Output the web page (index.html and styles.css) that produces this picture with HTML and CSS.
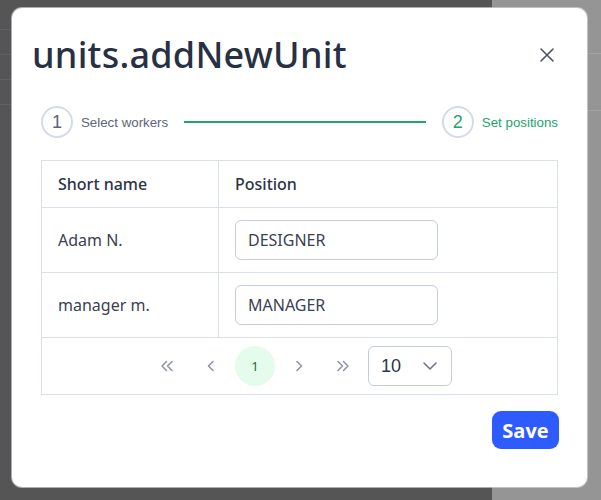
FILE: index.html
```html
<!DOCTYPE html>
<html>
<head>
<meta charset="utf-8">
<link rel="stylesheet" href="styles.css">
</head>
<body>
<div class="page">
  <div class="page-left">
    <div class="bg-row"></div>
    <div class="bg-row"></div>
    <div class="bg-row"></div>
    <div class="bg-row"></div>
  </div>
  <div class="page-right">
    <div class="bg-row-r"></div>
    <div class="bg-row-r"></div>
  </div>
</div>
<div class="modal">
  <div class="modal-header">
    <h1 class="title">units.addNewUnit</h1>
    <button class="close" aria-label="close">
      <svg width="14" height="14" viewBox="0 0 14 14"><path d="M1 1L13 13M13 1L1 13" stroke="#4a5263" stroke-width="1.6" fill="none" stroke-linecap="round"/></svg>
    </button>
  </div>
  <div class="modal-body">
    <div class="stepper">
      <div class="step">
        <span class="step-circle">1</span>
        <span class="step-label">Select workers</span>
      </div>
      <div class="step-line"></div>
      <div class="step step-active">
        <span class="step-circle">2</span>
        <span class="step-label">Set positions</span>
      </div>
    </div>
    <div class="table">
      <div class="tr th-row">
        <div class="cell c1">Short name</div>
        <div class="cell c2">Position</div>
      </div>
      <div class="tr">
        <div class="cell c1">Adam N.</div>
        <div class="cell c2"><input class="pos-input" value="DESIGNER"></div>
      </div>
      <div class="tr">
        <div class="cell c1">manager m.</div>
        <div class="cell c2"><input class="pos-input" value="MANAGER"></div>
      </div>
      <div class="pager">
        <button class="pg-btn" aria-label="first">
          <svg width="14" height="12" viewBox="0 0 14 12"><path d="M6.5 1.5L2 6L6.5 10.5M12 1.5L7.5 6L12 10.5" stroke="#8d96a6" stroke-width="1.6" fill="none" stroke-linecap="round" stroke-linejoin="round"/></svg>
        </button>
        <button class="pg-btn" aria-label="prev">
          <svg width="8" height="12" viewBox="0 0 8 12"><path d="M6 1.5L1.5 6L6 10.5" stroke="#8d96a6" stroke-width="1.6" fill="none" stroke-linecap="round" stroke-linejoin="round"/></svg>
        </button>
        <button class="pg-btn pg-current">1</button>
        <button class="pg-btn" aria-label="next">
          <svg width="8" height="12" viewBox="0 0 8 12"><path d="M2 1.5L6.5 6L2 10.5" stroke="#8d96a6" stroke-width="1.6" fill="none" stroke-linecap="round" stroke-linejoin="round"/></svg>
        </button>
        <button class="pg-btn" aria-label="last">
          <svg width="14" height="12" viewBox="0 0 14 12"><path d="M2 1.5L6.5 6L2 10.5M7.5 1.5L12 6L7.5 10.5" stroke="#8d96a6" stroke-width="1.6" fill="none" stroke-linecap="round" stroke-linejoin="round"/></svg>
        </button>
        <div class="size-select">
          <span class="size-val">10</span>
          <svg width="14" height="8" viewBox="0 0 14 8"><path d="M1 1L7 7L13 1" stroke="#6e7787" stroke-width="1.6" fill="none" stroke-linecap="round" stroke-linejoin="round"/></svg>
        </div>
      </div>
    </div>
    <div class="footer">
      <button class="save">Save</button>
    </div>
  </div>
</div>
</body>
</html>
```
FILE: styles.css
```css
* { box-sizing: border-box; }
html, body { margin: 0; padding: 0; }
body {
  width: 601px;
  height: 500px;
  overflow: hidden;
  font-family: "Noto Sans", "Open Sans", sans-serif;
  background: #555555;
}
.page {
  display: flex;
  height: 500px;
}
.page-left {
  width: 492px;
  background: #555555;
  padding-top: 29px;
}
.bg-row {
  height: 25px;
  border-top: 1px solid #5f6066;
}
.page-right {
  flex: 1;
  background: #959595;
  padding-top: 53px;
}
.bg-row-r {
  height: 57px;
  border-top: 1px solid #a3a3a6;
}
.modal {
  position: absolute;
  left: 12px;
  top: 8px;
  width: 575px;
  height: 479px;
  background: #ffffff;
  border-radius: 10px;
  box-shadow: 0 0 0 1px rgba(205, 212, 225, 0.7);
}
.modal-header {
  display: flex;
  align-items: center;
  justify-content: space-between;
  padding: 23px 33px 0 20px;
}
.title {
  margin: 0;
  font-family: "Noto Sans", sans-serif;
  font-weight: 500;
  font-size: 36px;
  line-height: 48px;
  color: #283044;
  letter-spacing: 0.25px;
}
.close {
  border: 0;
  background: transparent;
  padding: 0;
  width: 14px;
  height: 14px;
  display: flex;
  margin-top: -1px;
}
.modal-body {
  padding: 27px 29px 0 29px;
}
.stepper {
  display: flex;
  align-items: center;
  height: 32px;
}
.step {
  display: flex;
  align-items: center;
  gap: 8px;
}
.step-circle {
  width: 32px;
  height: 32px;
  border: 2px solid #d5dbe5;
  border-radius: 50%;
  display: flex;
  align-items: center;
  justify-content: center;
  font-family: "Liberation Sans", Arial, sans-serif;
  font-size: 18px;
  color: #5c6577;
}
.step-label {
  font-family: "Liberation Sans", Arial, sans-serif;
  font-size: 13.3px;
  color: #5c6577;
}
.step-active .step-circle,
.step-active .step-label {
  color: #21a56b;
}
.step-line {
  flex: 1;
  height: 2px;
  background: #21a56b;
  margin: 0 16px;
}
.table {
  margin-top: 22px;
  border: 1px solid #d9e0ea;
}
.tr {
  display: flex;
  border-bottom: 1px solid #d9e0ea;
  height: 65px;
  align-items: stretch;
}
.th-row { height: 47px; }
.cell {
  display: flex;
  align-items: center;
  padding: 0 16px;
  font-size: 16px;
  color: #3a4152;
}
.th-row .cell {
  font-weight: 500;
  color: #2d3446;
}
.c1 {
  width: 177px;
  border-right: 1px solid #d9e0ea;
}
.c2 { flex: 1; }
.pos-input {
  width: 203px;
  height: 40px;
  border: 1px solid #c5cdd9;
  border-radius: 6px;
  padding: 0 12px;
  font-family: "Noto Sans", sans-serif;
  font-size: 16px;
  color: #3a4152;
  outline: none;
}
.pager {
  display: flex;
  align-items: center;
  justify-content: center;
  gap: 4px;
  height: 56px;
}
.pg-btn {
  width: 40px;
  height: 40px;
  border: 0;
  border-radius: 50%;
  background: transparent;
  display: flex;
  align-items: center;
  justify-content: center;
  padding: 0;
  font-family: "Noto Sans", sans-serif;
  font-size: 13px;
  color: #1d6b3d;
}
.pg-current {
  background: #e5fbec;
}
.size-select {
  margin-left: 1px;
  width: 84px;
  height: 40px;
  border: 1px solid #c5cdd9;
  border-radius: 6px;
  display: flex;
  align-items: center;
  justify-content: space-between;
  padding: 0 14px 0 12px;
}
.size-val {
  font-family: "Liberation Sans", Arial, sans-serif;
  font-size: 18px;
  color: #2d3446;
}
.footer {
  display: flex;
  justify-content: flex-end;
  padding-top: 16px;
}
.save {
  width: 67px;
  height: 38px;
  border: 0;
  border-radius: 9px;
  background: #2e5bff;
  color: #ffffff;
  font-family: "Open Sans", "Noto Sans", sans-serif;
  font-weight: 700;
  font-size: 20px;
  padding: 0;
  margin-right: -1px;
}
```
